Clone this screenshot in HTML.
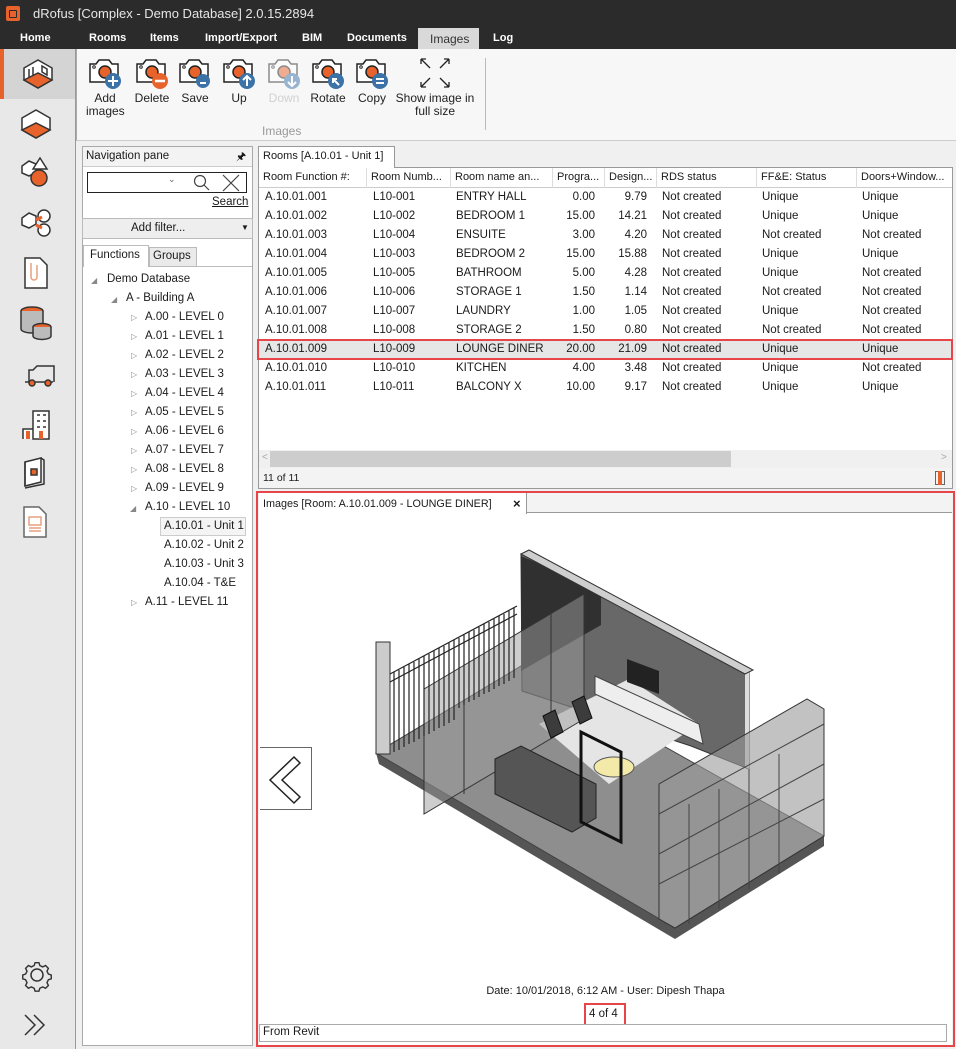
<!DOCTYPE html>
<html><head><meta charset="utf-8"><style>
*{margin:0;padding:0;box-sizing:border-box}
body{width:956px;height:1049px;overflow:hidden;background:#f0f0f0;font-family:"Liberation Sans",sans-serif;font-size:11.5px;color:#1a1a1a;position:relative}
.a{position:absolute;white-space:nowrap}
.menu span{position:absolute;top:32px;color:#fff;font-weight:bold;font-size:11px}
.rb{position:absolute;top:56px;text-align:center;font-size:12px;line-height:13px;color:#222}
.rb svg{display:block;margin:0 auto 2px}
.row{position:absolute;left:0;width:690px;height:19px}
.row span{position:absolute;top:3px}
.tr{position:absolute}
.tri{position:absolute;font-size:8px;color:#888}
</style></head><body>
<div class="a" style="left:0;top:0;width:956px;height:28px;background:#2b2b2b"></div>
<div class="a" style="left:6px;top:6px;width:14px;height:15px;background:#e8632b;border-radius:2px"></div>
<div class="a" style="left:9px;top:10px;width:8px;height:8px;border:1.5px solid #2b2b2b;border-radius:1px"></div>
<div class="a" style="left:33px;top:6px;color:#e6e6e6;font-size:13px">dRofus [Complex - Demo Database] 2.0.15.2894</div>
<div class="a" style="left:0;top:28px;width:956px;height:21px;background:#2b2b2b"></div>
<div class="a" style="left:418px;top:28px;width:61px;height:21px;background:#d9d9d9"></div>
<div class="menu"><span style="left:20px">Home</span><span style="left:89px">Rooms</span><span style="left:150px">Items</span><span style="left:205px">Import/Export</span><span style="left:302px">BIM</span><span style="left:347px">Documents</span><span style="left:430px;color:#333;font-weight:normal;font-size:12px">Images</span><span style="left:493px">Log</span></div>
<div class="a" style="left:0;top:49px;width:76px;height:1000px;background:#e8e8e8;border-right:1px solid #9a9a9a"></div>
<div class="a" style="left:0;top:49px;width:75px;height:50px;background:#d4d4d4;border-left:4px solid #e8632b"></div>
<svg class="a" style="left:0;top:49px" width="75" height="1000" viewBox="0 49 75 1000" fill="none" stroke="#333" stroke-width="1.5">
<g transform="translate(38,74)"><path d="M-14,-6 L0,-14 L14,-6 L14,6 L0,14 L-14,6Z" fill="#fff"/><path d="M-14,6 L0,-1 L14,6 L0,14Z" fill="#e8632b"/><path d="M-9,-5v8M-5,-7v8M4,-8l5,3v6l-5,-3z"/></g>
<g transform="translate(36,124)"><path d="M-14,-6 L0,-14 L14,-6 L14,6 L0,14 L-14,6Z" fill="#fff"/><path d="M-14,6 L0,-1 L14,6 L0,14Z" fill="#e8632b"/></g>
<g transform="translate(36,172)"><path d="M-14,-6l7,-5 7,3v8l-7,4 -7,-3z" fill="#fff"/><path d="M4,-14l7,11h-14z" fill="#fff"/><circle cx="3" cy="6" r="8" fill="#e8632b"/></g>
<g transform="translate(36,222)"><path d="M-14,-4l7,-5 7,3v8l-7,4 -7,-3z" fill="#fff"/><circle cx="8" cy="-6" r="6" fill="#fff"/><circle cx="8" cy="8" r="6" fill="#fff"/><path d="M0,-2l6,-3M0,3l6,3" stroke="#e8632b" stroke-width="3"/></g>
<g transform="translate(36,273)"><path d="M-11,-15h15l7,7v23h-22z" fill="#fff"/><path d="M-5,-10v14a3,3 0 0 0 6,0v-12" stroke="#e8a080"/></g>
<g transform="translate(36,323)" fill="#bbb"><ellipse cx="-4" cy="-12" rx="11" ry="4" fill="#e8632b"/><path d="M-15,-12v18a11,4 0 0 0 22,0v-18"/><ellipse cx="6" cy="4" rx="9" ry="3.5" fill="#e8632b"/><path d="M-3,4v9a9,3.5 0 0 0 18,0v-9"/></g>
<g transform="translate(37,374)"><path d="M-8,8v-12h4l4,-4h17v16M-12,8h28"/><circle cx="-5" cy="9" r="3" fill="#e8632b"/><circle cx="11" cy="9" r="3" fill="#e8632b"/></g>
<g transform="translate(37,424)"><path d="M-14,15v-10h10v10M-4,15v-28h16v28z" fill="#fff"/><rect x="-11" y="7" width="4" height="8" fill="#e8632b" stroke="none"/><rect x="2" y="7" width="4" height="8" fill="#e8632b" stroke="none"/><path d="M0,-9h3M6,-9h3M0,-3h3M6,-3h3M0,3h3M6,3h3"/></g>
<g transform="translate(35,474)"><path d="M-10,-12l16,-4v24l-16,4z" fill="#fff"/><path d="M-10,-12v24M6,-16l3,2v24l-19,4"/><rect x="-4" y="-5" width="6" height="6" fill="#e8632b"/></g>
<g transform="translate(35,522)"><path d="M-11,-15h15l7,7v23h-22z" fill="#fff" stroke="#666"/><path d="M-6,-5h12v8h-12zM-6,6h12M-6,9h12" stroke="#e8a080"/></g>
<g transform="translate(37,975)"><circle r="6"/><path d="M-2,-13h4l1,3 3,1.5 3,-1.5 3,3 -1.5,3 1.5,3 3,1v4l-3,1 -1.5,3 1.5,3 -3,3 -3,-1.5 -3,1.5 -1,3h-4l-1,-3 -3,-1.5 -3,1.5 -3,-3 1.5,-3 -1.5,-3 -3,-1v-4l3,-1 1.5,-3 -1.5,-3 3,-3 3,1.5 3,-1.5z" transform="scale(.95)"/></g>
<path d="M25,1015l10,10 -10,10M34,1015l10,10 -10,10"/>
</svg>
<div class="a" style="left:76px;top:49px;width:880px;height:92px;background:#f7f7f7;border-left:1px solid #aaa;border-bottom:1px solid #ccc"></div>
<div class="a" style="left:485px;top:58px;width:1px;height:72px;background:#bbb"></div>
<div class="a" style="left:262px;top:124px;color:#999;font-size:12px">Images</div>
<svg width="0" height="0" style="position:absolute"><defs><g id="cam"><path d="M2,8h6l3,-4h10l3,4h6v18h-28z" fill="#fff" stroke="#222" stroke-width="1.5"/><circle cx="17" cy="16" r="6" fill="#e8632b" stroke="#222" stroke-width="1.5"/><circle cx="6" cy="11" r="1.3" fill="none" stroke="#222"/></g></defs></svg>
<div class="rb" style="left:86px;width:38px"><svg width="34" height="34"><use href="#cam"/><circle cx="25" cy="25" r="8" fill="#3b72a8"/><path d="M25,20v10M20,25h10" stroke="#fff" stroke-width="2"/></svg>Add<br>images</div>
<div class="rb" style="left:132px;width:40px"><svg width="34" height="34"><use href="#cam"/><circle cx="25" cy="25" r="8" fill="#e8632b"/><path d="M20,25h10" stroke="#fff" stroke-width="2.5"/></svg>Delete</div>
<div class="rb" style="left:178px;width:34px"><svg width="34" height="34"><use href="#cam"/><circle cx="25" cy="25" r="7" fill="#3b72a8"/><path d="M22,27h6" stroke="#fff" stroke-width="2"/></svg>Save</div>
<div class="rb" style="left:222px;width:34px"><svg width="34" height="34"><use href="#cam"/><circle cx="25" cy="25" r="8" fill="#3b72a8"/><path d="M25,30v-9M21,24l4,-4 4,4" stroke="#fff" stroke-width="2" fill="none"/></svg>Up</div>
<div class="rb" style="left:266px;width:36px;color:#aaa;opacity:.5"><svg width="34" height="34"><use href="#cam"/><circle cx="25" cy="25" r="8" fill="#3b72a8"/><path d="M25,20v9M21,26l4,4 4,-4" stroke="#fff" stroke-width="2" fill="none"/></svg>Down</div>
<div class="rb" style="left:308px;width:40px"><svg width="34" height="34"><use href="#cam"/><circle cx="25" cy="25" r="8" fill="#3b72a8"/><path d="M28,29l-5,-5M22,27v-4h4" stroke="#fff" stroke-width="2" fill="none"/></svg>Rotate</div>
<div class="rb" style="left:355px;width:34px"><svg width="34" height="34"><use href="#cam"/><circle cx="25" cy="25" r="8" fill="#3b72a8"/><path d="M21,23h8M21,27h8" stroke="#fff" stroke-width="2"/></svg>Copy</div>
<div class="rb" style="left:394px;width:82px"><svg width="34" height="34" fill="none" stroke="#222" stroke-width="1.3"><path d="M3,3l9,9M3,3h5M3,3v5M31,3l-9,9M31,3h-5M31,3v5M3,31l9,-9M3,31h5M3,31v-5M31,31l-9,-9M31,31h-5M31,31v-5"/></svg>Show image in<br>full size</div>
<div class="a" style="left:82px;top:146px;width:171px;height:900px;background:#fff;border:1px solid #aaa"></div>
<div class="a" style="left:83px;top:147px;width:169px;height:20px;background:#f3f3f3;border-bottom:1px solid #ccc"></div>
<div class="a" style="left:86px;top:150px">Navigation pane</div>
<div class="a" style="left:236px;top:148px;font-size:11px">&#x1F588;</div>
<div class="a" style="left:87px;top:172px;width:160px;height:21px;border:1px solid #222;background:#fff"></div>
<div class="a" style="left:168px;top:174px;font-size:9px;color:#666">&#8964;</div>
<svg class="a" style="left:190px;top:173px" width="56" height="20" fill="none" stroke="#444" stroke-width="1.2"><circle cx="10" cy="8" r="5.5"/><path d="M14,12l5,5M33,2l16,16M49,2l-16,16"/></svg>
<div class="a" style="left:212px;top:196px;text-decoration:underline">Search</div>
<div class="a" style="left:82px;top:218px;width:171px;height:21px;background:#eee;border:1px solid #bbb"></div>
<div class="a" style="left:131px;top:222px">Add filter...</div>
<div class="a" style="left:241px;top:223px;font-size:8px">&#9660;</div>
<div class="a" style="left:83px;top:266px;width:169px;height:1px;background:#bbb"></div>
<div class="a" style="left:83px;top:245px;width:66px;height:22px;background:#fff;border:1px solid #bbb;border-bottom:none"></div>
<div class="a" style="left:90px;top:249px">Functions</div>
<div class="a" style="left:149px;top:247px;width:48px;height:20px;background:#eaeaea;border:1px solid #bbb"></div>
<div class="a" style="left:153px;top:250px">Groups</div>
<div class="tri" style="left:91px;top:276px">&#9698;</div><div class="tr" style="left:107px;top:273px">Demo Database</div>
<div class="tri" style="left:111px;top:295px">&#9698;</div><div class="tr" style="left:126px;top:292px">A - Building A</div>
<div class="tri" style="left:131px;top:313px">&#9655;</div><div class="tr" style="left:145px;top:311px">A.00 - LEVEL 0</div>
<div class="tri" style="left:131px;top:332px">&#9655;</div><div class="tr" style="left:145px;top:330px">A.01 - LEVEL 1</div>
<div class="tri" style="left:131px;top:351px">&#9655;</div><div class="tr" style="left:145px;top:349px">A.02 - LEVEL 2</div>
<div class="tri" style="left:131px;top:370px">&#9655;</div><div class="tr" style="left:145px;top:368px">A.03 - LEVEL 3</div>
<div class="tri" style="left:131px;top:389px">&#9655;</div><div class="tr" style="left:145px;top:387px">A.04 - LEVEL 4</div>
<div class="tri" style="left:131px;top:408px">&#9655;</div><div class="tr" style="left:145px;top:406px">A.05 - LEVEL 5</div>
<div class="tri" style="left:131px;top:427px">&#9655;</div><div class="tr" style="left:145px;top:425px">A.06 - LEVEL 6</div>
<div class="tri" style="left:131px;top:446px">&#9655;</div><div class="tr" style="left:145px;top:444px">A.07 - LEVEL 7</div>
<div class="tri" style="left:131px;top:465px">&#9655;</div><div class="tr" style="left:145px;top:463px">A.08 - LEVEL 8</div>
<div class="tri" style="left:131px;top:484px">&#9655;</div><div class="tr" style="left:145px;top:482px">A.09 - LEVEL 9</div>
<div class="tri" style="left:130px;top:504px">&#9698;</div><div class="tr" style="left:145px;top:501px">A.10 - LEVEL 10</div>
<div class="a" style="left:160px;top:517px;width:86px;height:19px;background:#f4f4f4;border:1px solid #ccc"></div>
<div class="tr" style="left:164px;top:520px">A.10.01 - Unit 1</div>
<div class="tr" style="left:164px;top:539px">A.10.02 - Unit 2</div>
<div class="tr" style="left:164px;top:558px">A.10.03 - Unit 3</div>
<div class="tr" style="left:164px;top:577px">A.10.04 - T&amp;E</div>
<div class="tri" style="left:131px;top:598px">&#9655;</div><div class="tr" style="left:145px;top:596px">A.11 - LEVEL 11</div>
<div class="a" style="left:258px;top:167px;width:695px;height:322px;background:#fff;border:1px solid #999"></div>
<div class="a" style="left:258px;top:146px;width:137px;height:22px;background:#fff;border:1px solid #999;border-bottom:none"></div>
<div class="a" style="left:263px;top:150px;font-size:11px">Rooms [A.10.01 - Unit 1]</div>
<div class="a" style="left:259px;top:168px;width:693px;height:20px;background:#fff;border-bottom:1px solid #ccc"></div>
<div class="a" style="left:259px;top:168px;width:693px;height:20px;font-size:11px">
<div class="row" style="top:0">
<span style="left:4px">Room Function #:</span><span style="left:112px">Room Numb...</span><span style="left:196px">Room name an...</span><span style="left:298px">Progra...</span><span style="left:350px">Design...</span><span style="left:402px">RDS status</span><span style="left:502px">FF&amp;E: Status</span><span style="left:602px">Doors+Window...</span>
</div></div>
<div class="a" style="left:366px;top:168px;width:1px;height:20px;background:#ddd"></div><div class="a" style="left:450px;top:168px;width:1px;height:20px;background:#ddd"></div><div class="a" style="left:552px;top:168px;width:1px;height:20px;background:#ddd"></div><div class="a" style="left:604px;top:168px;width:1px;height:20px;background:#ddd"></div><div class="a" style="left:656px;top:168px;width:1px;height:20px;background:#ddd"></div><div class="a" style="left:756px;top:168px;width:1px;height:20px;background:#ddd"></div><div class="a" style="left:856px;top:168px;width:1px;height:20px;background:#ddd"></div>
<div class="a" style="left:259px;top:340px;width:693px;height:19px;background:#e6e6e6"></div>
<div class="a" style="left:257px;top:339px;width:696px;height:21px;border:2px solid #e8454b"></div>
<div class="a" style="left:259px;top:188px;width:693px;height:200px;font-size:11.5px">
<div class="row" style="top:0"><span style="left:6px">A.10.01.001</span><span style="left:114px">L10-001</span><span style="left:197px">ENTRY HALL</span><span style="right:354px">0.00</span><span style="right:302px">9.79</span><span style="left:403px">Not created</span><span style="left:503px">Unique</span><span style="left:603px">Unique</span></div>
<div class="row" style="top:19px"><span style="left:6px">A.10.01.002</span><span style="left:114px">L10-002</span><span style="left:197px">BEDROOM 1</span><span style="right:354px">15.00</span><span style="right:302px">14.21</span><span style="left:403px">Not created</span><span style="left:503px">Unique</span><span style="left:603px">Unique</span></div>
<div class="row" style="top:38px"><span style="left:6px">A.10.01.003</span><span style="left:114px">L10-004</span><span style="left:197px">ENSUITE</span><span style="right:354px">3.00</span><span style="right:302px">4.20</span><span style="left:403px">Not created</span><span style="left:503px">Not created</span><span style="left:603px">Not created</span></div>
<div class="row" style="top:57px"><span style="left:6px">A.10.01.004</span><span style="left:114px">L10-003</span><span style="left:197px">BEDROOM 2</span><span style="right:354px">15.00</span><span style="right:302px">15.88</span><span style="left:403px">Not created</span><span style="left:503px">Unique</span><span style="left:603px">Unique</span></div>
<div class="row" style="top:76px"><span style="left:6px">A.10.01.005</span><span style="left:114px">L10-005</span><span style="left:197px">BATHROOM</span><span style="right:354px">5.00</span><span style="right:302px">4.28</span><span style="left:403px">Not created</span><span style="left:503px">Unique</span><span style="left:603px">Not created</span></div>
<div class="row" style="top:95px"><span style="left:6px">A.10.01.006</span><span style="left:114px">L10-006</span><span style="left:197px">STORAGE 1</span><span style="right:354px">1.50</span><span style="right:302px">1.14</span><span style="left:403px">Not created</span><span style="left:503px">Not created</span><span style="left:603px">Not created</span></div>
<div class="row" style="top:114px"><span style="left:6px">A.10.01.007</span><span style="left:114px">L10-007</span><span style="left:197px">LAUNDRY</span><span style="right:354px">1.00</span><span style="right:302px">1.05</span><span style="left:403px">Not created</span><span style="left:503px">Unique</span><span style="left:603px">Not created</span></div>
<div class="row" style="top:133px"><span style="left:6px">A.10.01.008</span><span style="left:114px">L10-008</span><span style="left:197px">STORAGE 2</span><span style="right:354px">1.50</span><span style="right:302px">0.80</span><span style="left:403px">Not created</span><span style="left:503px">Not created</span><span style="left:603px">Not created</span></div>
<div class="row" style="top:152px"><span style="left:6px">A.10.01.009</span><span style="left:114px">L10-009</span><span style="left:197px">LOUNGE DINER</span><span style="right:354px">20.00</span><span style="right:302px">21.09</span><span style="left:403px">Not created</span><span style="left:503px">Unique</span><span style="left:603px">Unique</span></div>
<div class="row" style="top:171px"><span style="left:6px">A.10.01.010</span><span style="left:114px">L10-010</span><span style="left:197px">KITCHEN</span><span style="right:354px">4.00</span><span style="right:302px">3.48</span><span style="left:403px">Not created</span><span style="left:503px">Unique</span><span style="left:603px">Not created</span></div>
<div class="row" style="top:190px"><span style="left:6px">A.10.01.011</span><span style="left:114px">L10-011</span><span style="left:197px">BALCONY X</span><span style="right:354px">10.00</span><span style="right:302px">9.17</span><span style="left:403px">Not created</span><span style="left:503px">Unique</span><span style="left:603px">Unique</span></div>
</div>
<div class="a" style="left:259px;top:450px;width:693px;height:18px;background:#f0f0f0"></div>
<div class="a" style="left:270px;top:451px;width:461px;height:16px;background:#cdcdcd"></div>
<div class="a" style="left:262px;top:452px;font-size:10px;color:#aaa">&lt;</div><div class="a" style="left:941px;top:452px;font-size:10px;color:#aaa">&gt;</div>
<div class="a" style="left:259px;top:468px;width:693px;height:20px;background:#f3f3f3"></div>
<div class="a" style="left:263px;top:472px;font-size:10.5px">11 of 11</div>
<div class="a" style="left:935px;top:471px;width:10px;height:14px;border:1px solid #666"></div><div class="a" style="left:938px;top:471px;width:4px;height:14px;background:#e8632b"></div>
<div class="a" style="left:259px;top:493px;width:693px;height:552px;background:#fff"></div>
<div class="a" style="left:259px;top:493px;width:693px;height:20px;background:#f3f3f3;border-bottom:1px solid #999"></div>
<div class="a" style="left:259px;top:493px;width:268px;height:21px;background:#fff;border-right:1px solid #999"></div>
<div class="a" style="left:263px;top:498px;font-size:10.8px">Images [Room: A.10.01.009 - LOUNGE DINER]</div>
<div class="a" style="left:513px;top:496px;font-size:13px;font-weight:bold">×</div>
<svg class="a" style="left:259px;top:514px" width="693" height="460">
<polygon points="117,239 120,250 416,425 565,332 565,322 416,414" fill="#555"/>
<polygon points="117,239 262,152 565,322 416,414" fill="#8e8e8e" stroke="#444"/>
<polygon points="262,42 263,177 432,232 490,255 490,155 336,76 262,40" fill="#686868" stroke="#333"/>
<polygon points="262,42 262,157 342,111 342,76" fill="#303030"/>
<polygon points="486,152 490,155 490,255 486,253" fill="#ddd"/>
<polygon points="262,40 270,36 494,156 486,160" fill="#cfcfcf" stroke="#333"/>
<polygon points="280,210 370,165 440,210 350,270" fill="#e5e5e5"/>
<polygon points="336,162 440,210 444,230 336,180" fill="#eee" stroke="#444"/>
<polygon points="368,145 400,157 400,180 368,168" fill="#222"/>
<polygon points="165,175 325,80 325,205 165,300" fill="#9b9b9b" fill-opacity=".5" stroke="#333"/>
<line x1="205" y1="152" x2="205" y2="280" stroke="#333"/><line x1="292" y1="100" x2="292" y2="225" stroke="#333"/>
<rect x="117" y="128" width="14" height="112" fill="#ccc" stroke="#333"/>
<g stroke="#222" stroke-width="1.2"><path d="M131,160 L258,92 M131,168 L258,100"/>
<path d="M135,158v80M140,156v80M145,153v80M150,150v80M155,148v80M160,145v80M165,142v80M170,140v80M175,137v80M180,134v80M185,132v80M190,129v80M195,126v80M200,124v70M205,121v70M210,118v70M215,116v70M220,113v70M225,110v70M230,108v70M235,105v70M240,102v70M245,100v70M250,97v70M255,94v70"/></g>
<polygon points="236,245 262,232 337,270 337,304 313,318 236,280" fill="#555" stroke="#222"/>
<path d="M284,202 l12,-6 8,22 -12,6z M313,188 l12,-6 8,22 -12,6z" fill="#3c3c3c" stroke="#111"/>
<ellipse cx="355" cy="253" rx="20" ry="10" fill="#f3e9a8" stroke="#555"/>
<path d="M322,308v-90l40,20v90z" fill="none" stroke="#111" stroke-width="3"/>
<polygon points="400,270 548,185 565,195 565,322 416,414 400,405" fill="#9a9a9a" fill-opacity=".6" stroke="#333"/>
<g stroke="#444" fill="none"><path d="M400,300 L565,210 M400,340 L565,250 M400,370 L565,285 M430,290v120 M460,275v120 M490,255v120 M520,240v120"/></g>
</svg>
<div class="a" style="left:260px;top:747px;width:52px;height:63px;background:#fff;border:1px solid #666;border-left:none"></div>
<svg class="a" style="left:266px;top:755px" width="40" height="50" fill="none" stroke="#222" stroke-width="1.5"><path d="M28,2 L4,25 L28,48 L34,42 L16,25 L34,8Z"/></svg>
<div class="a" style="left:259px;top:985px;width:693px;text-align:center;font-size:11px">Date: 10/01/2018, 6:12 AM - User: Dipesh Thapa</div>
<div class="a" style="left:589px;top:1008px">4 of 4</div>
<div class="a" style="left:584px;top:1003px;width:42px;height:24px;border:2.5px solid #e8454b"></div>
<div class="a" style="left:259px;top:1024px;width:688px;height:18px;border:1px solid #aaa;background:#fff"></div>
<div class="a" style="left:263px;top:1026px">From Revit</div>
<div class="a" style="left:256px;top:491px;width:699px;height:556px;border:2.5px solid #e8454b"></div>
</body></html>
